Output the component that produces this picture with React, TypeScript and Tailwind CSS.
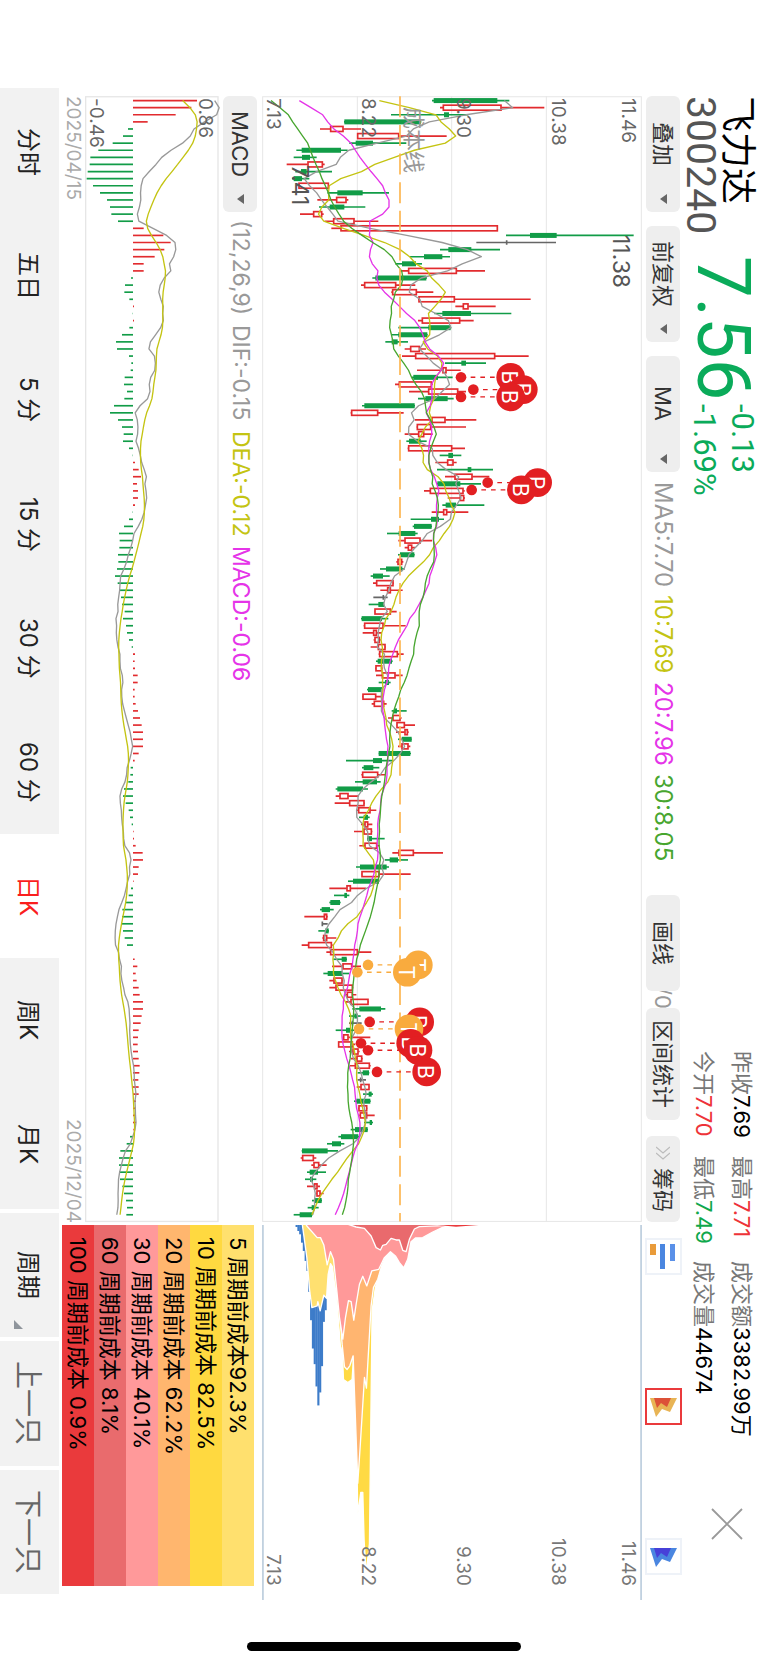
import React from "react";

type Kind = "r" | "g" | "k";
type Candle = [Kind, number, number, number, number];

const STEP = 21.29;
const FIRST = 13;
const rowY = (i: number) => FIRST + i * STEP;

// kind, low, body low, body high, high (in chart units, three per pixel)
const CANDLES: Candle[] = `
g528,533,724,760 r552,561,736,865 g405,564,579,637 g264,265,495,496 r192,223,262,315 r303,304,429,572
g280,299,351,451 g121,137,255,275 g113,138,162,182 r92,155,200,206 g118,135,152,228 g108,113,138,160
r125,128,218,220 g214,244,320,399 r184,241,271,277 g189,221,265,328 r132,172,198,203 r206,232,295,367
r226,254,725,725 g750,822,902,1133 k661,752,754,900 g552,577,646,732 g462,504,559,582 g418,438,480,498
r432,457,602,687 g349,358,511,513 r315,325,420,478 r406,409,482,532 r486,488,596,824 r598,621,637,719
g535,559,645,766 r486,498,612,653 g427,517,584,586 g408,427,514,515 g388,407,425,456 r446,463,491,510
r438,478,717,818 g567,616,630,690 r483,560,571,614 g468,472,546,590 r417,429,527,530 r459,517,606,630
g486,508,575,593 g318,325,476,477 r284,286,366,443 r477,527,568,661 r482,483,525,630 r446,487,504,530
g451,459,494,512 r455,457,588,627 g551,577,591,616 r538,574,592,602 g543,635,646,711 r567,596,649,700
g543,544,613,675 r504,522,622,626 r575,612,624,627 g559,569,600,685 r527,562,573,637 g464,525,549,564
g470,474,527,528 g393,428,478,485 r427,446,493,528 r446,456,468,477 g426,432,475,476 r421,425,438,442
g372,390,439,446 g344,351,381,401 r351,361,412,414 r373,394,404,440 k352,382,385,395 g338,367,384,385
r355,356,404,422 g315,317,378,397 r323,325,382,449 r320,352,362,378 r353,356,371,374 r344,366,388,390
r368,370,425,443 g360,365,408,410 r357,359,378,379 r360,378,418,440 g368,387,399,404 g333,336,379,379
r318,320,360,378 r347,354,384,392 g407,414,423,452 r396,410,433,437 r421,422,446,477 r420,446,455,458
g426,438,467,467 r426,437,457,463 g368,368,463,465 g270,351,378,412 g318,323,352,370 r316,319,366,388
g297,320,363,374 g239,244,321,336 r239,251,277,308 r236,280,325,327 r301,307,343,361 g309,323,336,341
r315,326,336,349 r294,323,347,349 g333,334,348,386 r310,326,363,371 r409,428,473,561 g387,401,426,456
g300,312,392,399 r316,317,370,464 g276,291,369,370 r220,272,284,330 g234,265,273,280 g220,223,252,254
g192,197,222,233 r145,204,213,215 k197,199,201,215 g187,208,218,219 r199,202,213,241 r137,157,227,230
r211,223,305,346 g232,257,272,273 r228,260,288,315 g202,215,259,280 r220,233,259,262 r220,239,290,292
r270,273,290,301 r270,284,337,339 g289,310,375,388 g279,295,305,314 k279,289,292,317 g239,270,282,298
r260,262,277,343 r246,247,290,298 r279,290,307,311 r285,302,318,320 r282,297,341,344 g305,320,339,340
k305,314,317,330 r302,314,340,341 g321,338,347,351 g294,301,343,344 r306,308,333,334 r310,312,333,356
g324,341,348,351 g284,297,335,336 g247,255,307,312 g213,228,255,265 g137,138,215,246 r134,139,173,181
r166,173,189,212 g153,161,186,210 g147,162,171,181 r153,175,184,192 r180,182,193,203 g168,176,197,198
g155,167,177,188 g113,131,168,170`
  .trim()
  .split(/\s+/)
  .map((s) => {
    const [a, b, c, d] = s.slice(1).split(",").map(Number);
    return [s[0] as Kind, a, b, c, d];
  });

const CLOSES = CANDLES.map(([k, , lo, hi]) => (k === "r" ? hi : lo));

function average(n: number, seed: number[]) {
  return CLOSES.map((_, i) =>
    i < seed.length
      ? seed[i]
      : CLOSES.slice(Math.max(0, i - n + 1), i + 1).reduce((a, b) => a + b, 0) / n
  );
}

const MA5 = average(5, [745, 770, 630, 520]);
const MA10 = average(10, [370, 460, 540, 555, 580, 599, 568, 475, 415]);
const MA20 = average(20, [
  130, 165, 200, 215, 234, 262, 285, 298, 312, 328, 345, 363, 380, 388, 399, 399, 380, 341, 342,
]);
const MA30 = average(30, [
  45, 72, 97, 110, 125, 140, 155, 163, 171, 180, 190, 198, 208, 217, 225, 236, 249, 263, 287, 318, 350,
  385, 408, 420, 437, 441, 436, 418, 413,
]);

const BARS = [
  192, 175, 128, 44, -15, -30, -61, -104, -128, -130, -136, -139, -120, -99, -78, -69, -65, -45, 32, 91,
  113, 94, 65, 32, 32, -6, -24, -26, -11, 3, -1, 3, -11, -33, -51, -48, -12, -5, -7, -25, -27, -18, -26,
  -57, -69, -45, -33, -28, -30, -12, -1, 6, 17, 24, 12, 15, 15, 6, -1, -12, -27, -42, -40, -41, -45, -44,
  -48, -54, -46, -39, -36, -33, -25, -30, -21, -18, -12, -4, 6, 5, 6, 14, 14, 5, 5, 8, 15, 21, 26, 30, 30,
  30, 17, 5, -7, -8, -14, -27, -30, -22, -13, -9, -4, 2, 3, 8, 29, 30, 17, 15, 2, -6, -13, -23, -32, -33,
  -33, -30, -25, -18, 0, 5, 13, 8, 11, 17, 20, 30, 30, 26, 23, 17, 15, 14, 15, 17, 20, 19, 16, 17, 17, 9,
  9, 8, 9, 2, -9, -19, -38, -42, -42, -42, -39, -32, -27, -21, -18, -20,
];

const DEA: number[] = [];
BARS.forEach((b, i) => DEA.push(i === 0 ? 398 : DEA[i - 1] + b / 8));
const DIF = DEA.map((d, i) => d + BARS[i] / 2);

const line = (xs: number[]) => xs.map((x, i) => `${x.toFixed(1)},${rowY(i).toFixed(1)}`).join(" ");

const COLORS = { r: "#e22b2e", g: "#119c47", k: "#666666" };

type Marker = { dot: [number, number]; to: [number, number]; label: string; color: string };
const RED = "#e21f22";
const ORANGE = "#f9ab3e";
const MARKERS: Marker[] = [
  { dot: [615, 843], to: [764, 843], label: "B", color: RED },
  { dot: [652, 880], to: [802, 880], label: "B", color: RED },
  { dot: [615, 902], to: [764, 902], label: "B", color: RED },
  { dot: [695, 1159], to: [845, 1159], label: "P", color: RED },
  { dot: [647, 1181], to: [796, 1181], label: "B", color: RED },
  { dot: [336, 2606], to: [487, 2606], label: "T", color: ORANGE },
  { dot: [304, 2628], to: [454, 2628], label: "T", color: ORANGE },
  { dot: [341, 2777], to: [491, 2777], label: "B", color: RED },
  { dot: [309, 2798], to: [459, 2798], label: "T", color: ORANGE },
  { dot: [315, 2841], to: [464, 2841], label: "B", color: RED },
  { dot: [336, 2862], to: [486, 2862], label: "B", color: RED },
  { dot: [363, 2927], to: [512, 2927], label: "B", color: RED },
];

const AXIS = [
  { text: "7.13", place: "left-0.5" },
  { text: "8.22", place: "left-[25.5%]" },
  { text: "9.30", place: "left-[50.5%]" },
  { text: "10.38", place: "left-[75.5%]" },
  { text: "11.46", place: "right-1" },
];

function CandleChart() {
  return (
    <div className="relative min-h-0">
      <svg viewBox="18 0 1140 3378" className="absolute inset-0 h-full w-full" aria-label="日K线">
        <g stroke="#e6e6e6" strokeWidth="3" fill="none">
          <rect x="20" y="1.5" width="1136" height="3374" />
          <path d="M304 0V3376M587 0V3376M871 0V3376" />
        </g>
        {CANDLES.map(([k, low, lo, hi, high], i) => {
          const y = rowY(i);
          const c = COLORS[k];
          if (k === "g")
            return (
              <g key={i}>
                <path d={`M${low} ${y}H${high}`} stroke={c} strokeWidth="5" />
                <rect x={lo} y={y - 7.5} width={hi - lo} height="15" fill={c} />
              </g>
            );
          if (k === "k")
            return <path key={i} d={`M${low} ${y}H${high}M${lo} ${y - 7}V${y + 7}`} stroke={c} strokeWidth="5" />;
          return (
            <g key={i} stroke={c} fill="none">
              <path d={`M${low} ${y}H${lo}M${hi} ${y}H${high}`} strokeWidth="5" />
              <rect x={lo + 1} y={y - 7.5} width={Math.max(hi - lo - 2, 3)} height="15" strokeWidth="5" />
            </g>
          );
        })}
        <g fill="none" strokeWidth="4" strokeLinejoin="round">
          <polyline points={line(MA5)} stroke="#999999" />
          <polyline points={line(MA10)} stroke="#c4c412" />
          <polyline points={line(MA20)} stroke="#e534e8" />
          <polyline points={line(MA30)} stroke="#47a62f" />
        </g>
        <path d="M432 0V3376" stroke="#fdb54f" strokeWidth="5" strokeDasharray="63 22.9" />
        {MARKERS.map((m, i) => (
          <g key={i}>
            <path
              d={`M${m.dot[0]} ${m.dot[1]}H${m.to[0]}`}
              stroke={m.color}
              strokeWidth="4"
              strokeDasharray="14 15"
            />
            <circle cx={m.dot[0]} cy={m.dot[1]} r="16" fill={m.color} />
            <circle cx={m.to[0]} cy={m.to[1]} r="43" fill={m.color} />
            <text
              transform={`translate(${m.to[0] - 25} ${m.to[1]}) rotate(90)`}
              textAnchor="middle"
              fontSize="63"
              fill="#ffffff"
              className="font-[Inter,sans-serif] [writing-mode:horizontal-tb]"
            >
              {m.label}
            </text>
          </g>
        ))}
        <g className="font-[Inter,'Noto_Sans_CJK_SC',sans-serif] [writing-mode:horizontal-tb]">
          <text transform="translate(451 32) rotate(90)" fontSize="66" fill="#999999">
            成本线
          </text>
          <text transform="translate(107 206) rotate(90)" fontSize="69" fill="#555555">
            7.41
          </text>
          <text transform="translate(1072 416) rotate(90)" fontSize="69" fill="#555555">
            11.38
          </text>
        </g>
      </svg>
      {AXIS.map((a) => (
        <span key={a.text} className={`absolute top-0.5 text-[19px] leading-none text-[#666] ${a.place}`}>
          {a.text}
        </span>
      ))}
    </div>
  );
}

const STEPS = [48, 60, 70, 95, 120, 150, 180, 243, 328, 413, 460, 527, 584, 545, 466, 333, 298];

function ChipsChart() {
  return (
    <div className="relative min-h-0">
      <svg viewBox="18 42 1140 1128" className="absolute inset-0 h-full w-full" aria-label="筹码分布">
        {STEPS.map((y, i) => (
          <rect key={i} x={118 + i * 5.45} y="42" width="6.4" height={y - 42} fill="#3d7cc9" />
        ))}
        <g stroke="#ffffff" strokeWidth="4" strokeLinejoin="round">
          <path
            d="M138 38L152 140L160 235L167 290L183 285L185 272L192 300L203 253L211 262L216 190L223 158L229 168L240 260L246 38Z"
            fill="#ffe070"
          />
          <path
            d="M240 240L248 345L255 435L258 410L262 506L275 515L288 506L292 440L303 800L305 910L314 845L320 845L324 990L330 1088L340 1000L348 300L357 235L380 140L400 38Z"
            fill="#ffda44"
          />
          <path
            d="M250 300L258 400L265 468L273 476L281 465L291 435L305 818L312 710L325 500L331 532L335 460L345 285L352 230L365 205L375 170L388 138L400 38Z"
            fill="#ffb570"
          />
          <path
            d="M148 38L152 45L183 80L193 80L203 102L213 162L223 122L232 145L242 240L250 320L260 385L268 320L277 269L285 272L293 328L300 280L310 220L320 196L332 225L347 180L368 175L385 140L403 122L418 135L430 155L443 171L455 145L465 92L478 81L500 80L530 63L560 49L600 38Z"
            fill="#ff9999"
          />
          <path
            d="M270 38L300 48L325 52L345 75L360 110L373 117L380 103L390 100L405 82L420 87L430 87L440 118L450 122L460 85L475 54L490 47L560 44L600 38Z"
            fill="#e96a6d"
          />
        </g>
        <path d="M545 42L600 47L668 42Z" fill="#ea3a3c" />
        <path d="M20 42V1170M1156 42V1170" stroke="#bccddd" strokeWidth="5" />
      </svg>
      {AXIS.map((a) => (
        <span key={a.text} className={`absolute bottom-3.5 text-[19px] leading-none text-[#777] ${a.place}`}>
          {a.text}
        </span>
      ))}
    </div>
  );
}

function MacdChart() {
  return (
    <div className="relative w-[134px] flex-1">
      <svg viewBox="105 0 402 3378" className="absolute inset-0 h-full w-full overflow-visible" aria-label="MACD">
        <rect x="107" y="1.5" width="397" height="3374" fill="none" stroke="#e6e6e6" strokeWidth="4" />
        {BARS.map((b, i) => (
          <path key={i} d={`M249 ${rowY(i)}h${b}`} stroke={b > 0 ? COLORS.r : COLORS.g} strokeWidth="5" />
        ))}
        <g fill="none" strokeWidth="4" strokeLinejoin="round">
          <polyline points={line(DIF)} stroke="#999999" />
          <polyline points={line(DEA)} stroke="#c4c412" />
        </g>
      </svg>
      <span className="absolute top-0.5 right-1 text-[19px] leading-none text-[#666]">0.86</span>
      <span className="absolute top-0.5 left-0.5 text-[19px] leading-none text-[#666]">-0.46</span>
    </div>
  );
}

function Select({ children }: { children: React.ReactNode }) {
  return (
    <button
      type="button"
      className="relative flex h-29 w-[34px] items-center justify-center rounded-md bg-[#eeeeee] pb-5 text-[22px] leading-none text-[#333]"
    >
      {children}
      <svg viewBox="0 0 7 10" className="absolute bottom-2 left-3.5 h-2.5 w-[7px]" fill="#666">
        <path d="M0 5L7 0V10Z" />
      </svg>
    </button>
  );
}

function ChipButton({ children, label, active }: { children: React.ReactNode; label: string; active?: boolean }) {
  return (
    <button
      type="button"
      aria-label={label}
      className={`h-[37px] w-[37px] shrink-0 border-2 ${active ? "border-[#ea3a3c]" : "border-[#eef2f8]"}`}
    >
      <svg viewBox="2 2 33 33" className="h-full w-full">
        {children}
      </svg>
    </button>
  );
}

function Stat({ label, value, tone }: { label: string; value: string; tone: string }) {
  return (
    <div className="whitespace-nowrap">
      <span className="text-[#777]">{label}</span>
      <span className={tone}>{value}</span>
    </div>
  );
}

const LEGEND = [
  { text: "5 周期前成本92.3%", bg: "bg-[#ffe06e]" },
  { text: "10 周期前成本 82.5%", bg: "bg-[#ffd940]" },
  { text: "20 周期前成本 62.2%", bg: "bg-[#ffb66e]" },
  { text: "30 周期前成本 40.1%", bg: "bg-[#ff999a]" },
  { text: "60 周期前成本 8.1%", bg: "bg-[#e96b6d]" },
  { text: "100 周期前成本 0.9%", bg: "bg-[#ea3a3c]" },
];

const TABS = ["分时", "五日", "5 分", "15 分", "30 分", "60 分", "日K", "周K", "月K"];

export default function App() {
  return (
    <div className="flex min-h-screen flex-col bg-white font-[Inter,'Noto_Sans_CJK_SC',sans-serif]">
      <main className="flex w-full flex-1 flex-col [text-orientation:sideways] [writing-mode:vertical-rl] [&_button]:[text-orientation:sideways] [&_button]:[writing-mode:vertical-rl]">
        <header className="mt-24 flex w-[88px] shrink-0 items-center pr-2 pb-15 pl-1.5">
          <div className="flex h-40 flex-col pr-2">
            <h1 className="text-4xl leading-none">飞力达</h1>
            <span className="font-[Roboto,sans-serif] text-[41px] leading-[38px] text-[#555]">300240</span>
          </div>
          <strong className="font-[Roboto,sans-serif] text-[74px] leading-none font-normal text-[#0aab5a]">7.56</strong>
          <div className="mt-1 flex flex-col gap-0.5 font-[Roboto,sans-serif] text-[31px] leading-[36px] text-[#0aab5a]">
            <span>-0.13</span>
            <span>-1.69%</span>
          </div>
          <div className="mt-auto grid grid-cols-[105px_105px_172px] text-[22px] leading-[38px]">
            <Stat label="昨收" value="7.69" tone="text-black" />
            <Stat label="最高" value="7.71" tone="text-[#ee3338]" />
            <Stat label="成交额" value="3382.99万" tone="text-black" />
            <Stat label="今开" value="7.70" tone="text-[#ee3338]" />
            <Stat label="最低" value="7.49" tone="text-[#0fa84c]" />
            <Stat label="成交量" value="44674" tone="text-black" />
          </div>
          <button type="button" aria-label="关闭" className="mt-[75px] ml-2 h-8 w-8">
            <svg viewBox="0 0 32 32" className="h-full w-full" stroke="#999" strokeWidth="1.8">
              <path d="M1 1L31 31M31 1L1 31" />
            </svg>
          </button>
        </header>

        <div className="mt-24 flex w-[38px] shrink-0 items-center pb-[25px] pl-1 text-[22px] leading-none whitespace-nowrap">
          <div className="flex gap-3.5">
            <Select>叠加</Select>
            <Select>前复权</Select>
            <Select>MA</Select>
          </div>
          <div className="mt-2.5 flex gap-2 text-2xl leading-none">
            <span className="text-[#999]">MA5:7.70</span>
            <span className="text-[#c4c412]">10:7.69</span>
            <span className="text-[#e534e8]">20:7.96</span>
            <span className="text-[#47a62f]">30:8.05</span>
          </div>
          <button
            type="button"
            className="relative z-10 mt-auto flex h-24 w-[34px] items-center justify-center rounded-md bg-[#eeeeee] text-[#333]"
          >
            画线
          </button>
          <span className="-mt-1 h-[21px] text-[#999]">/0</span>
          <button
            type="button"
            className="relative flex h-28 w-[34px] items-center justify-center rounded-md bg-[#eeeeee] text-[#333]"
          >
            区间统计
          </button>
          <button
            type="button"
            className="mt-4 flex h-[86px] w-[34px] items-center justify-center gap-2 rounded-md bg-[#eeeeee] text-[#333]"
          >
            <svg viewBox="0 0 14 14" className="h-3.5 w-3.5" fill="none" stroke="#bbb" strokeWidth="1.2">
              <path d="M0 1L7 7L14 1M0 7L7 13L14 7" />
            </svg>
            筹码
          </button>
          <div className="mt-4 flex gap-[113px]">
            <ChipButton label="筹码分布">
              <rect x="5" y="6" width="6" height="11" fill="#e99b3a" />
              <rect x="15" y="6" width="5" height="25" fill="#4a86e0" />
              <rect x="25" y="6" width="5" height="17" fill="#5a90e8" />
            </ChipButton>
            <ChipButton label="远期移动成本分布" active>
              <path d="M5 10H32L25 24L17 21L11 29Z" fill="#e8b455" />
              <path d="M9 10H26L22 19L16 15L12 20Z" fill="#dc5138" />
            </ChipButton>
            <ChipButton label="近期移动成本分布">
              <path d="M5 10H32L25 24L17 21L11 29Z" fill="#4a86e0" />
              <path d="M9 10H26L22 19L16 15L12 20Z" fill="#4740d8" />
            </ChipButton>
          </div>
        </div>

        <section className="mt-24 grid flex-1 grid-cols-[3fr_1fr] gap-0.5">
          <CandleChart />
          <ChipsChart />
        </section>

        <section className="mt-24 grid shrink-0 grid-cols-[3fr_1fr] gap-0.5 pr-[5px] pl-0.5">
          <div className="flex flex-col">
            <div className="flex items-center gap-2 text-[23px] leading-none whitespace-nowrap">
              <Select>MACD</Select>
              <div className="flex gap-2.5">
                <span className="text-[#999]">(12,26,9)</span>
                <span className="text-[#999]">DIF:-0.15</span>
                <span className="text-[#c4c412]">DEA:-0.12</span>
                <span className="text-[#e534e8]">MACD:-0.06</span>
              </div>
            </div>
            <div className="mr-1 flex">
              <MacdChart />
            </div>
            <div className="flex w-6 items-center justify-between text-[19px] leading-none text-[#aaa]">
              <time dateTime="2025-04-15">2025/04/15</time>
              <time dateTime="2025-12-04">2025/12/04</time>
            </div>
          </div>
          <ul className="mr-[3px] mb-3.5 flex flex-col text-[22px] leading-8 whitespace-nowrap text-black">
            {LEGEND.map((l) => (
              <li key={l.text} className={`pt-3 ${l.bg}`}>
                {l.text}
              </li>
            ))}
          </ul>
        </section>

        <nav className="mt-[88px] mb-1.5 grid w-[59px] shrink-0 grid-cols-[9fr_1fr_1fr_1fr] gap-1 text-2xl leading-none text-[#222]">
          <div className="grid grid-cols-9 bg-[#f2f2f2] px-0.5">
            {TABS.map((t) => (
              <button
                key={t}
                type="button"
                className={`flex items-center justify-center pr-1 ${t === "日K" ? "bg-white text-[#fa1e1e]" : ""}`}
              >
                {t}
              </button>
            ))}
          </div>
          <button type="button" className="relative flex items-center justify-center bg-[#f2f2f2] pr-1">
            周期
            <svg viewBox="0 0 9 9" className="absolute bottom-2 left-3.5 h-[9px] w-[9px]" fill="#8f959c">
              <path d="M0 0V9H9Z" />
            </svg>
          </button>
          <button type="button" className="flex items-center justify-center bg-[#f2f2f2] pr-1 text-[28px] text-[#666]">
            上一只
          </button>
          <button type="button" className="flex items-center justify-center bg-[#f2f2f2] pr-1 text-[28px] text-[#666]">
            下一只
          </button>
        </nav>
      </main>
      <div className="flex h-[65px] items-end justify-center pb-3.5">
        <div className="h-[9px] w-[274px] rounded-full bg-black" />
      </div>
    </div>
  );
}
